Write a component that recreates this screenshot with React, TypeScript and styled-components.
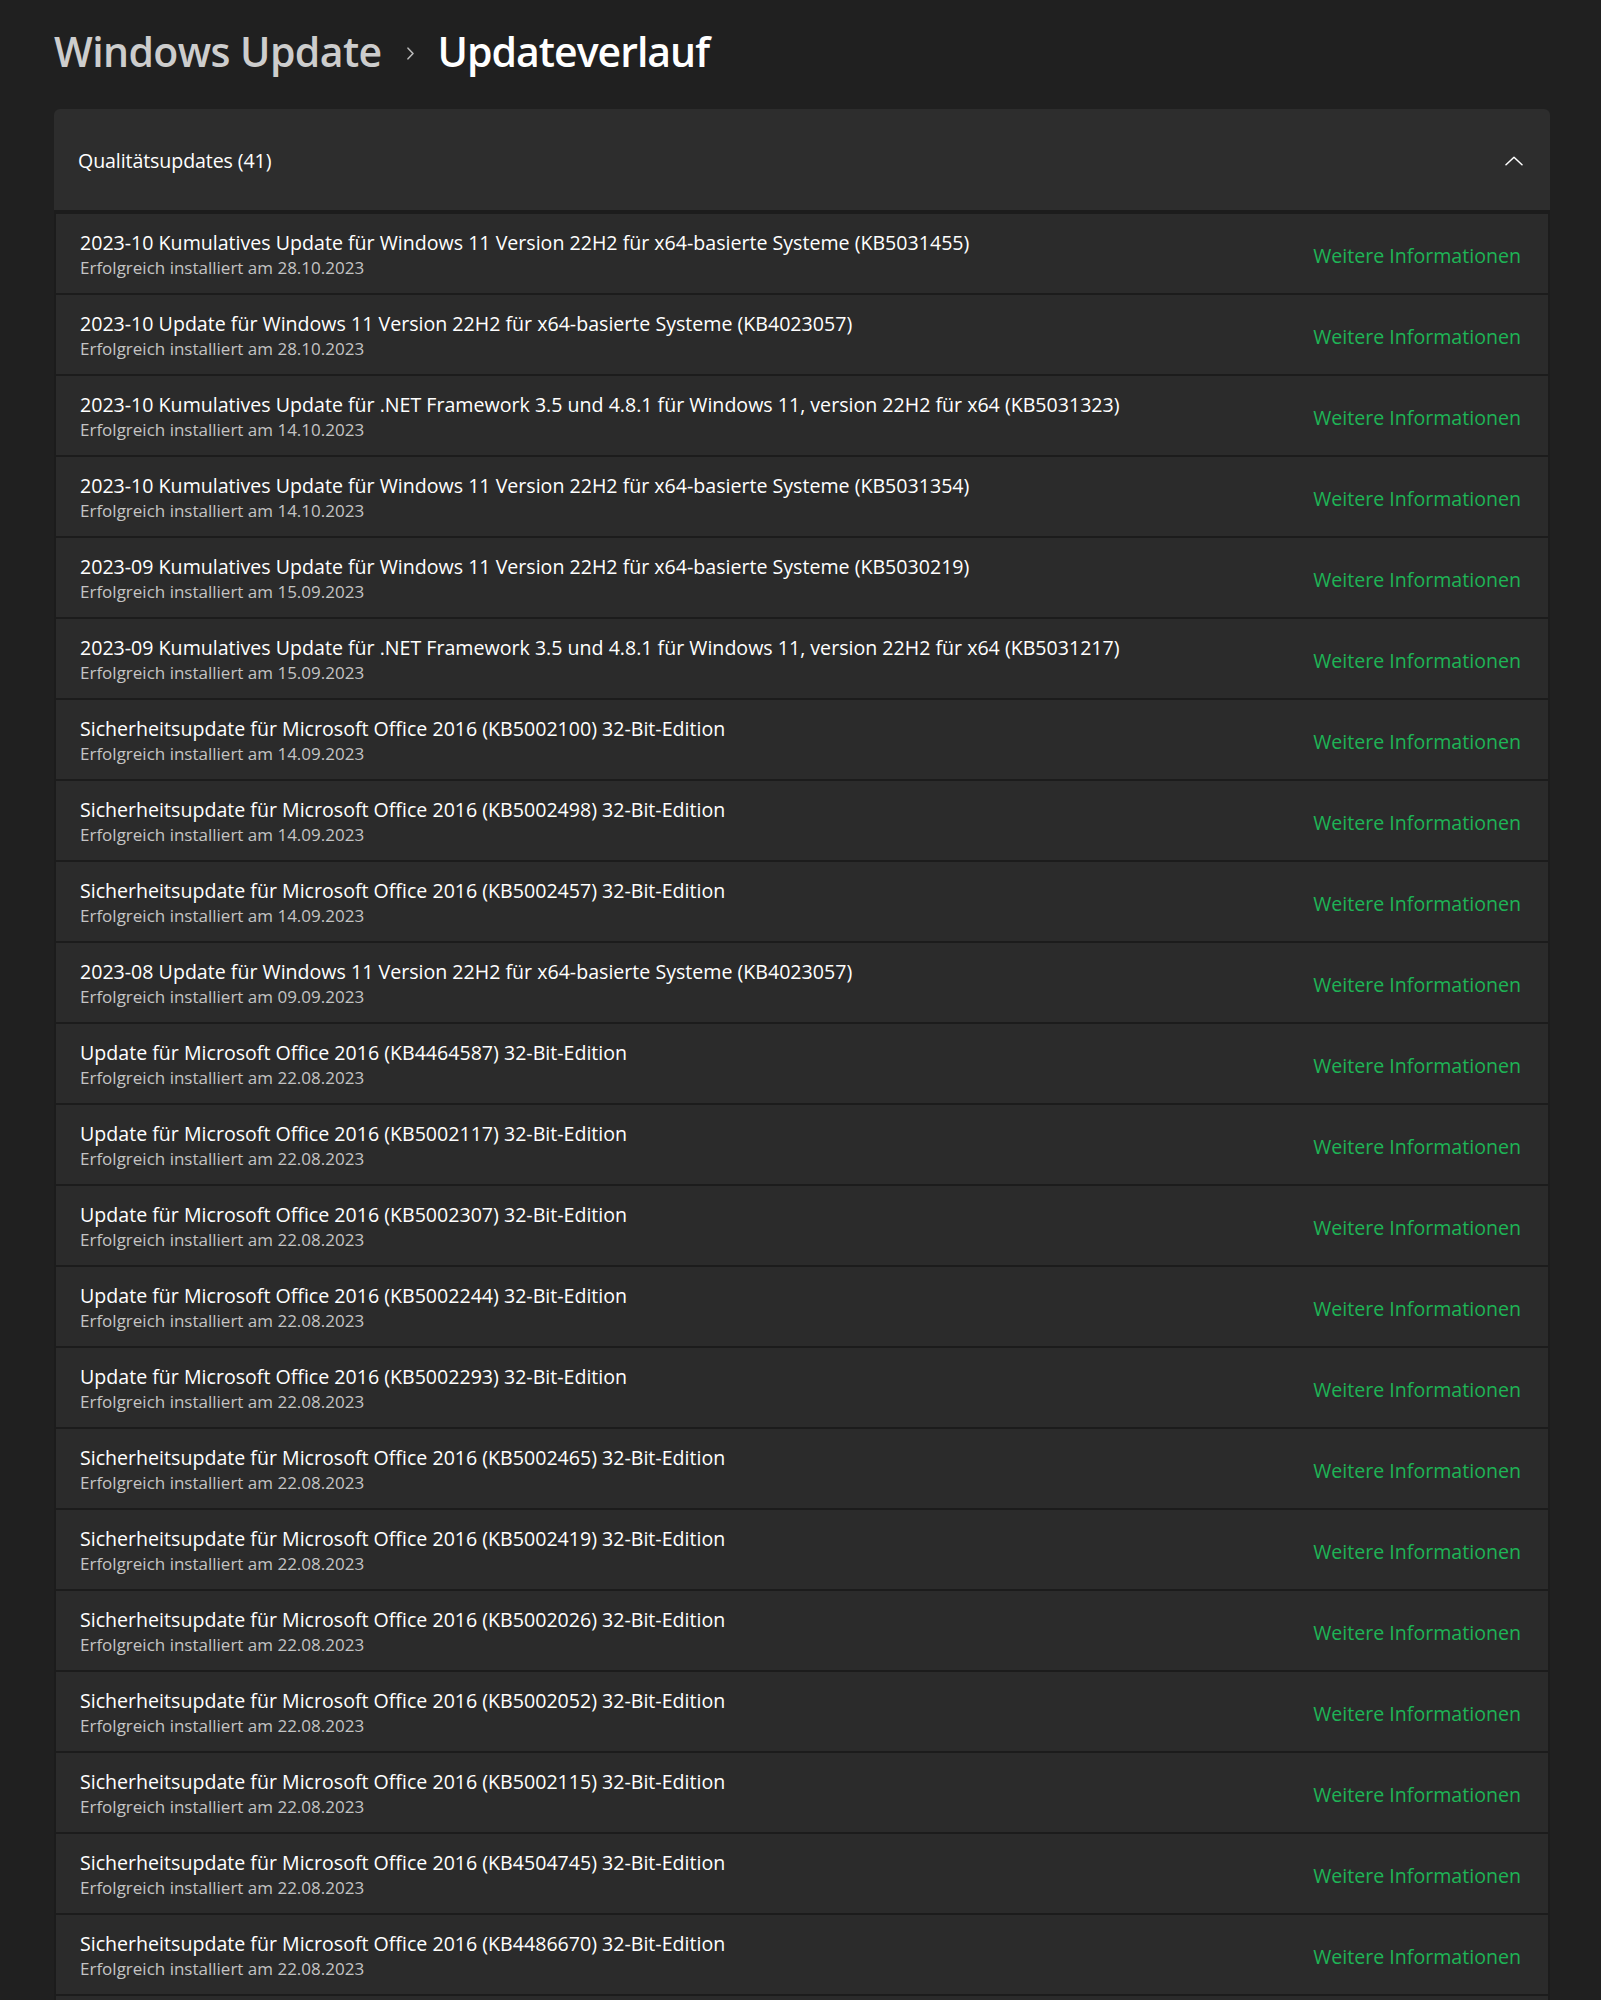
import React from 'react';
import styled, { createGlobalStyle } from 'styled-components';

const GlobalStyle = createGlobalStyle`
  html, body {
    margin: 0;
    padding: 0;
    background: #202020;
    overflow: hidden;
  }
  * {
    box-sizing: border-box;
  }
`;

const Page = styled.div`
  height: 2000px;
  overflow: hidden;
  background: #202020;
  font-family: 'Segoe UI', 'Open Sans', 'Noto Sans', sans-serif;
  color: #ffffff;
  padding: 23px 51px 0 54px;
`;

const Breadcrumb = styled.h1`
  margin: 0;
  display: flex;
  align-items: center;
  height: 56px;
  font-size: 41px;
  line-height: 56px;
  font-weight: 600;
`;

const Crumb = styled.span<{ $current?: boolean }>`
  color: ${(p) => (p.$current ? '#ffffff' : '#cdcdcd')};
  letter-spacing: ${(p) => (p.$current ? '-1px' : '-0.6px')};
`;

const CrumbSep = styled.span`
  display: flex;
  align-items: center;
  margin: 4px 23px 0 24px;
`;

const Expander = styled.section`
  margin-top: 30px;
`;

const Header = styled.div`
  display: flex;
  align-items: center;
  justify-content: space-between;
  height: 101px;
  padding: 2px 27px 0 24px;
  background: #2d2d2d;
  border-radius: 6px 6px 0 0;
  font-size: 19.6px;
  letter-spacing: -0.1px;
`;

const Content = styled.div`
  display: flex;
  flex-direction: column;
  gap: 2px;
  padding: 4px 2px 0;
  background: #1c1c1c;
`;

const Row = styled.div`
  display: flex;
  align-items: center;
  justify-content: space-between;
  height: 79px;
  padding: 0 27px 0 24px;
  background: #2b2b2b;
`;

const Texts = styled.div`
  display: flex;
  flex-direction: column;
  padding-top: 2px;
`;

const Title = styled.div`
  font-size: 19.6px;
  line-height: 26px;
  color: #ffffff;
  white-space: nowrap;
`;

const Sub = styled.div`
  margin-top: 1px;
  font-size: 17px;
  line-height: 22px;
  color: #c4c4c4;
  white-space: nowrap;
`;

const Link = styled.a`
  font-size: 19.6px;
  color: #1eb456;
  text-decoration: none;
  white-space: nowrap;
  margin-top: 3px;
`;

const updates: [string, string][] = [
  ['2023-10 Kumulatives Update für Windows 11 Version 22H2 für x64-basierte Systeme (KB5031455)', '28.10.2023'],
  ['2023-10 Update für Windows 11 Version 22H2 für x64-basierte Systeme (KB4023057)', '28.10.2023'],
  ['2023-10 Kumulatives Update für .NET Framework 3.5 und 4.8.1 für Windows 11, version 22H2 für x64 (KB5031323)', '14.10.2023'],
  ['2023-10 Kumulatives Update für Windows 11 Version 22H2 für x64-basierte Systeme (KB5031354)', '14.10.2023'],
  ['2023-09 Kumulatives Update für Windows 11 Version 22H2 für x64-basierte Systeme (KB5030219)', '15.09.2023'],
  ['2023-09 Kumulatives Update für .NET Framework 3.5 und 4.8.1 für Windows 11, version 22H2 für x64 (KB5031217)', '15.09.2023'],
  ['Sicherheitsupdate für Microsoft Office 2016 (KB5002100) 32-Bit-Edition', '14.09.2023'],
  ['Sicherheitsupdate für Microsoft Office 2016 (KB5002498) 32-Bit-Edition', '14.09.2023'],
  ['Sicherheitsupdate für Microsoft Office 2016 (KB5002457) 32-Bit-Edition', '14.09.2023'],
  ['2023-08 Update für Windows 11 Version 22H2 für x64-basierte Systeme (KB4023057)', '09.09.2023'],
  ['Update für Microsoft Office 2016 (KB4464587) 32-Bit-Edition', '22.08.2023'],
  ['Update für Microsoft Office 2016 (KB5002117) 32-Bit-Edition', '22.08.2023'],
  ['Update für Microsoft Office 2016 (KB5002307) 32-Bit-Edition', '22.08.2023'],
  ['Update für Microsoft Office 2016 (KB5002244) 32-Bit-Edition', '22.08.2023'],
  ['Update für Microsoft Office 2016 (KB5002293) 32-Bit-Edition', '22.08.2023'],
  ['Sicherheitsupdate für Microsoft Office 2016 (KB5002465) 32-Bit-Edition', '22.08.2023'],
  ['Sicherheitsupdate für Microsoft Office 2016 (KB5002419) 32-Bit-Edition', '22.08.2023'],
  ['Sicherheitsupdate für Microsoft Office 2016 (KB5002026) 32-Bit-Edition', '22.08.2023'],
  ['Sicherheitsupdate für Microsoft Office 2016 (KB5002052) 32-Bit-Edition', '22.08.2023'],
  ['Sicherheitsupdate für Microsoft Office 2016 (KB5002115) 32-Bit-Edition', '22.08.2023'],
  ['Sicherheitsupdate für Microsoft Office 2016 (KB4504745) 32-Bit-Edition', '22.08.2023'],
  ['Sicherheitsupdate für Microsoft Office 2016 (KB4486670) 32-Bit-Edition', '22.08.2023'],
];

const ChevronRight = () => (
  <svg width="9" height="13" viewBox="0 0 9 13" fill="none">
    <path d="M2 1.2 L7 6.5 L2 11.8" stroke="#b8b8b8" strokeWidth="1.6" strokeLinecap="round" strokeLinejoin="round" />
  </svg>
);

const ChevronUp = () => (
  <svg width="18" height="10" viewBox="0 0 18 10" fill="none">
    <path d="M1 8.8 L9 1.2 L17 8.8" stroke="#ffffff" strokeWidth="1.5" strokeLinecap="round" strokeLinejoin="round" />
  </svg>
);

const App: React.FC = () => {
  return (
    <Page>
      <GlobalStyle />
      <Breadcrumb>
        <Crumb>Windows Update</Crumb>
        <CrumbSep>
          <ChevronRight />
        </CrumbSep>
        <Crumb $current>Updateverlauf</Crumb>
      </Breadcrumb>
      <Expander>
        <Header>
          <span>Qualitätsupdates (41)</span>
          <ChevronUp />
        </Header>
        <Content>
          {updates.map(([name, date], i) => (
            <Row key={i}>
              <Texts>
                <Title>{name}</Title>
                <Sub>Erfolgreich installiert am {date}</Sub>
              </Texts>
              <Link href="#">Weitere Informationen</Link>
            </Row>
          ))}
          {/* next entry, only its top edge is on screen */}
          <Row />
        </Content>
      </Expander>
    </Page>
  );
};

export default App;
